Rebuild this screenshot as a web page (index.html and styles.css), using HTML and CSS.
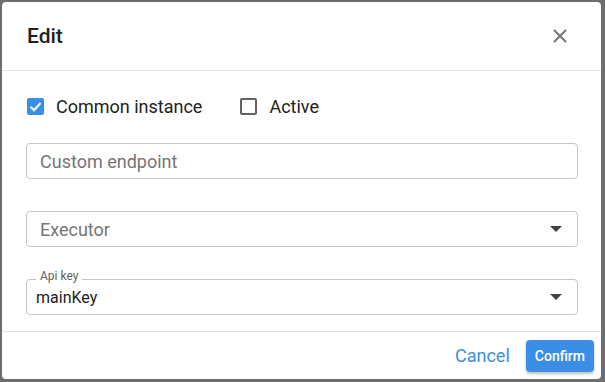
FILE: index.html
```html
<!DOCTYPE html>
<html lang="en">
  <head>
    <meta charset="UTF-8" />
    <meta name="viewport" content="width=device-width, initial-scale=1.0" />
    <title>Edit</title>
    <link rel="stylesheet" href="styles.css">
  </head>
  <body>
    <div class="dialog">
      <div class="dialog-header">
        <h2>Edit</h2>
        <button class="close-button" aria-label="Close">
          <svg width="14" height="14" viewBox="0 0 14 14">
            <path d="M1 1L13 13M13 1L1 13" stroke="#757575" stroke-width="2" />
          </svg>
        </button>
      </div>

      <div class="dialog-body">
        <div class="checks">
          <label class="check">
            <span class="box checked">
              <svg width="17" height="17" viewBox="0 0 17 17">
                <path d="M3.5 8.8L7 12.2L13.6 5" stroke="#fff" stroke-width="2" fill="none" />
              </svg>
            </span>
            Common instance
          </label>
          <label class="check">
            <span class="box"></span>
            Active
          </label>
        </div>

        <div class="field">
          <span class="placeholder">Custom endpoint</span>
        </div>

        <div class="field select">
          <span class="placeholder">Executor</span>
          <span class="arrow"></span>
        </div>

        <div class="field select filled">
          <span class="legend">Api key</span>
          <span class="value">mainKey</span>
          <span class="arrow"></span>
        </div>
      </div>

      <div class="dialog-footer">
        <button class="cancel-button">Cancel</button>
        <button class="confirm-button">Confirm</button>
      </div>
    </div>
  </body>
</html>
```

FILE: styles.css
```css
body {
  margin: 0;
  font-family: Roboto, "Liberation Sans", sans-serif;
  background-color: #6e6e6e;
  padding: 2px 4px 3px 2px;
  height: 382px;
  box-sizing: border-box;
  overflow: hidden;
}

.dialog {
  background-color: #fff;
  border-radius: 4px;
  height: 377px;
  display: flex;
  flex-direction: column;
}

.dialog-header {
  flex-shrink: 0;
  height: 68px;
  display: flex;
  align-items: center;
  justify-content: space-between;
  padding: 0 34px 0 25px;
  border-bottom: 1px solid #e0e0e0;
}

.dialog-header h2 {
  margin: 0;
  font-size: 21px;
  font-weight: 500;
  color: #212121;
}

.close-button {
  background: none;
  border: none;
  padding: 0;
  width: 14px;
  height: 14px;
  display: flex;
  cursor: pointer;
}

.dialog-body {
  flex: 1;
  padding: 25px 23px 0 24px;
}

.checks {
  display: flex;
  gap: 38px;
  height: 20px;
  align-items: center;
  padding-left: 1px;
  margin-bottom: 27px;
}

.check {
  display: flex;
  align-items: center;
  gap: 12px;
  font-size: 18px;
  color: #212121;
}

.box {
  width: 17px;
  height: 17px;
  box-sizing: border-box;
  border: 2px solid #616161;
  border-radius: 2px;
  display: flex;
}

.box.checked {
  border: none;
  background-color: #3a8ee6;
}

.field {
  position: relative;
  height: 36px;
  box-sizing: border-box;
  border: 1px solid #c4c4c4;
  border-radius: 4px;
  display: flex;
  align-items: center;
  padding: 0 15px 0 13px;
  margin-bottom: 32px;
}

.field:last-child {
  margin-bottom: 0;
}

.placeholder {
  flex: 1;
  font-size: 18px;
  color: #757575;
}

.value {
  flex: 1;
  font-size: 16px;
  color: #212121;
  margin-left: -4px;
}

.arrow {
  width: 0;
  height: 0;
  border-left: 6px solid transparent;
  border-right: 6px solid transparent;
  border-top: 6px solid #424242;
}

.legend {
  position: absolute;
  top: -11px;
  left: 9px;
  padding: 0 4px;
  background-color: #fff;
  font-size: 12px;
  line-height: 14px;
  color: #616161;
}

.dialog-footer {
  flex-shrink: 0;
  height: 47px;
  border-top: 1px solid #e0e0e0;
  display: flex;
  align-items: center;
  justify-content: flex-end;
  gap: 8px;
  padding: 0 7px 0 0;
}

.cancel-button {
  background: none;
  border: none;
  font-family: inherit;
  font-size: 18px;
  color: #3a8ee6;
  padding: 6px 8px;
  cursor: pointer;
}

.confirm-button {
  background-color: #3a8ee6;
  color: #fff;
  border: none;
  border-radius: 4px;
  font-family: inherit;
  font-size: 14px;
  font-weight: 500;
  height: 32px;
  padding: 0 9px;
  box-shadow: 0 2px 3px rgba(0, 0, 0, 0.25);
  cursor: pointer;
}
```
